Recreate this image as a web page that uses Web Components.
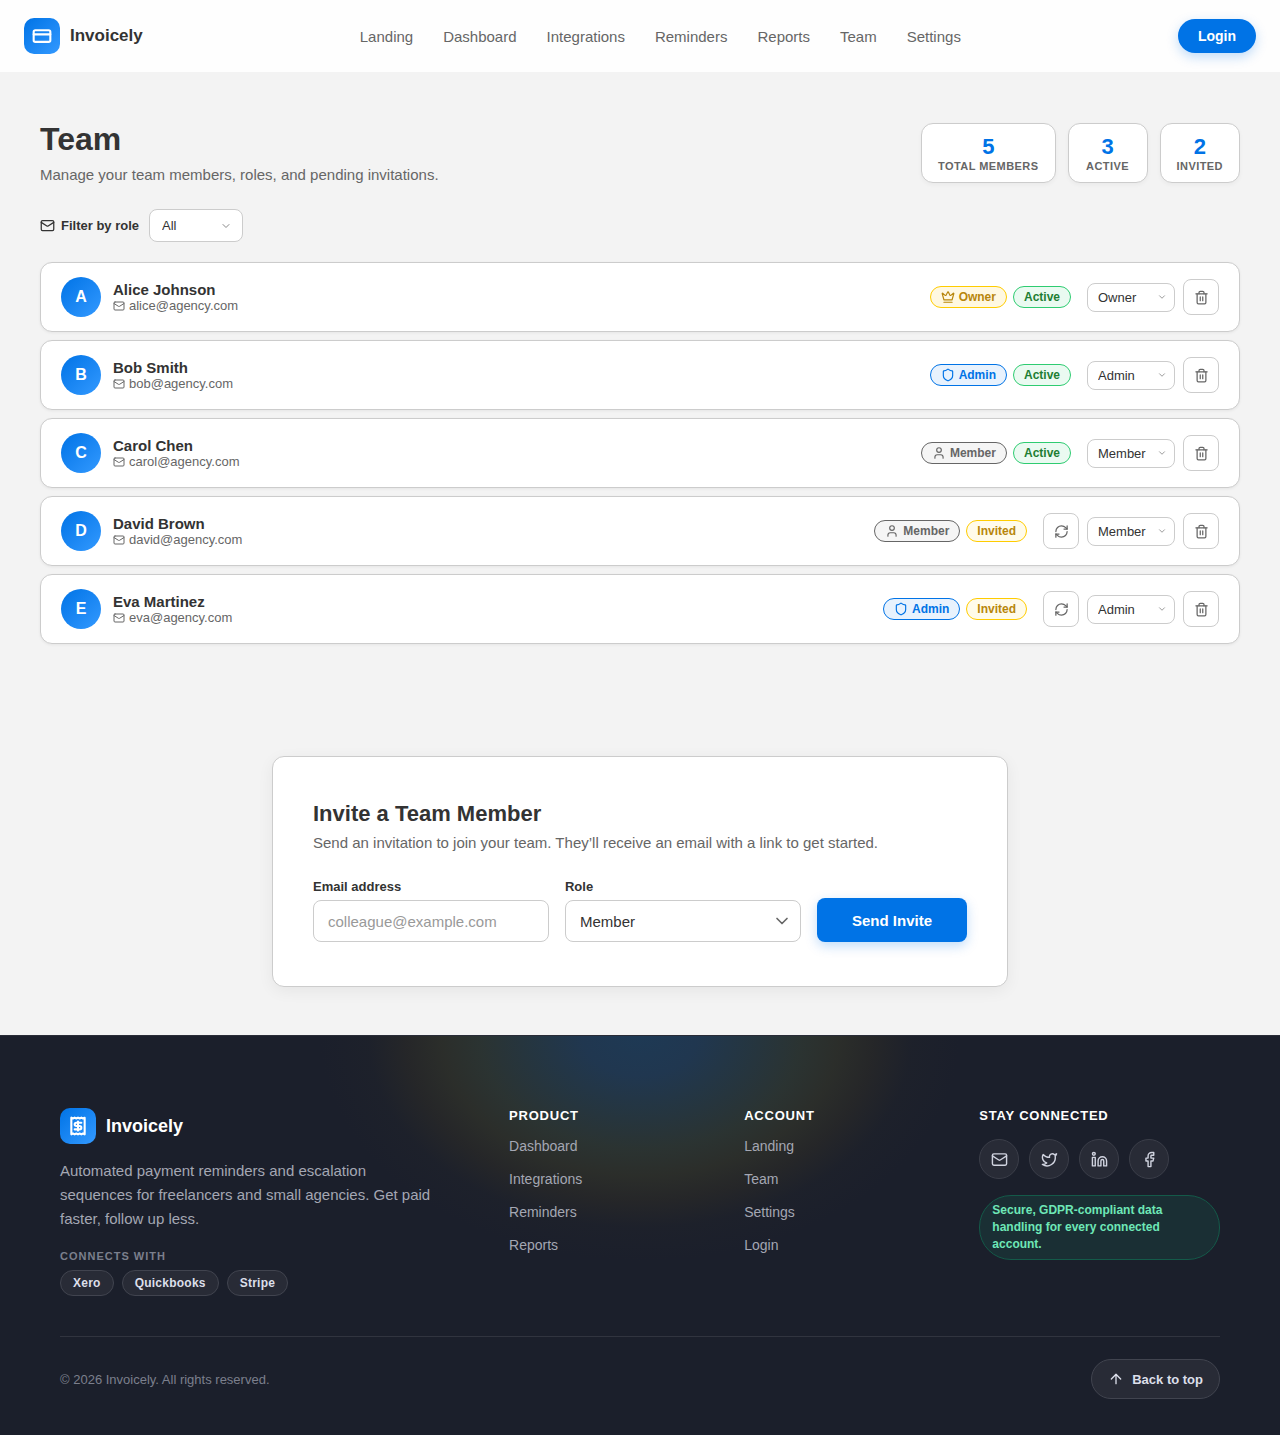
<!DOCTYPE html>
<html lang="en">
<head>
<meta charset="utf-8">
<meta name="viewport" content="width=device-width, initial-scale=1">
<title>Team - Invoicely</title>
<style>
    :root {
        --primary: #0073e6;
        --primary-light: #3399ff;
        --text: #333333;
        --muted: #666666;
        --border: #cccccc;
        --dark: #1b1f2b;
    }
    body {
        margin: 0;
        background: #f3f3f3;
        color: var(--text);
        font-family: "Liberation Sans", Arial, sans-serif;
        font-size: 15px;
    }
</style>
</head>
<body>
<site-header></site-header>
<team-page>
    <stat-card slot="stats" value="5">Total members</stat-card>
    <stat-card slot="stats" value="3">Active</stat-card>
    <stat-card slot="stats" value="2">Invited</stat-card>
    <member-row name="Alice Johnson" email="alice@agency.com" role-name="Owner" status="Active"></member-row>
    <member-row name="Bob Smith" email="bob@agency.com" role-name="Admin" status="Active"></member-row>
    <member-row name="Carol Chen" email="carol@agency.com" role-name="Member" status="Active"></member-row>
    <member-row name="David Brown" email="david@agency.com" role-name="Member" status="Invited"></member-row>
    <member-row name="Eva Martinez" email="eva@agency.com" role-name="Admin" status="Invited"></member-row>
</team-page>
<invite-form></invite-form>
<site-footer></site-footer>

<script>
const icons = {
    card: `<rect x="2" y="5" width="20" height="14" rx="2"/><path d="M2 10h20"/>`,
    mail: `<rect x="2" y="4" width="20" height="16" rx="2"/><path d="m22 7-8.97 5.7a1.94 1.94 0 0 1-2.06 0L2 7"/>`,
    chevron: `<path d="m6 9 6 6 6-6"/>`,
    crown: `<path d="M11.562 3.266a.5.5 0 0 1 .876 0L15.39 8.87a1 1 0 0 0 1.516.294L21.183 5.5a.5.5 0 0 1 .798.519l-2.834 10.246a1 1 0 0 1-.956.734H5.81a1 1 0 0 1-.957-.734L2.02 6.02a.5.5 0 0 1 .798-.519l4.276 3.664a1 1 0 0 0 1.516-.294z"/><path d="M5 21h14"/>`,
    shield: `<path d="M20 13c0 5-3.5 7.5-7.66 8.95a1 1 0 0 1-.67-.01C7.5 20.5 4 18 4 13V6a1 1 0 0 1 1-1c2 0 4.5-1.2 6.24-2.72a1.17 1.17 0 0 1 1.52 0C14.51 3.81 17 5 19 5a1 1 0 0 1 1 1z"/>`,
    user: `<path d="M19 21v-2a4 4 0 0 0-4-4H9a4 4 0 0 0-4 4v2"/><circle cx="12" cy="7" r="4"/>`,
    trash: `<path d="M3 6h18"/><path d="M19 6v14c0 1-1 2-2 2H7c-1 0-2-1-2-2V6"/><path d="M8 6V4c0-1 1-2 2-2h4c1 0 2 1 2 2v2"/><path d="M10 11v6M14 11v6"/>`,
    refresh: `<path d="M3 12a9 9 0 0 1 9-9 9.75 9.75 0 0 1 6.74 2.74L21 8"/><path d="M21 3v5h-5"/><path d="M21 12a9 9 0 0 1-9 9 9.75 9.75 0 0 1-6.74-2.74L3 16"/><path d="M8 16H3v5"/>`,
    receipt: `<path d="M4 2v20l2-1 2 1 2-1 2 1 2-1 2 1 2-1 2 1V2l-2 1-2-1-2 1-2-1-2 1-2-1-2 1Z"/><path d="M16 8h-6a2 2 0 1 0 0 4h4a2 2 0 1 1 0 4H8"/><path d="M12 17.5v-11"/>`,
    twitter: `<path d="M22 4s-.7 2.1-2 3.4c1.6 10-9.4 17.3-18 11.6 2.2.1 4.4-.6 6-2C3 15.5.5 9.6 3 5c2.2 2.6 5.6 4.1 9 4-.9-4.2 4-6.6 7-3.8 1.1 0 3-1.2 3-1.2z"/>`,
    linkedin: `<path d="M16 8a6 6 0 0 1 6 6v7h-4v-7a2 2 0 0 0-4 0v7h-4v-7a6 6 0 0 1 6-6z"/><rect x="2" y="9" width="4" height="12"/><circle cx="4" cy="4" r="2"/>`,
    facebook: `<path d="M18 2h-3a5 5 0 0 0-5 5v3H7v4h3v8h4v-8h3l1-4h-4V7a1 1 0 0 1 1-1h3z"/>`,
    arrow: `<path d="m5 12 7-7 7 7"/><path d="M12 19V5"/>`
};

// every component renders its template into an open shadow root
class BaseElement extends HTMLElement {
    constructor() {
        super();
        this.attachShadow({ mode: "open" });
    }
    connectedCallback() {
        const template = document.createElement("template");
        template.innerHTML = `
        <style>
            *, *::before { box-sizing: border-box; }
            h1, h2, h3, p, ul { margin: 0; padding: 0; }
            ul { list-style: none; }
            a { color: inherit; text-decoration: none; }
            button, select, input { font: inherit; color: inherit; margin: 0; }
            button { cursor: pointer; }
            ${this.getStyle()}
        </style>
        ${this.getTemplate()}`;
        this.shadowRoot.appendChild(template.content.cloneNode(true));
    }
}

class UiIcon extends BaseElement {
    getStyle() {
        return `
            :host { display: inline-flex; flex: none; }
            svg { display: block; }`;
    }
    getTemplate() {
        const size = this.getAttribute("size") || 16;
        return `
        <svg width="${size}" height="${size}" viewBox="0 0 24 24" fill="none" stroke="currentColor"
            stroke-width="${this.getAttribute("stroke") || 2}" stroke-linecap="round" stroke-linejoin="round" aria-hidden="true">
            ${icons[this.getAttribute("name")]}
        </svg>`;
    }
}

class BrandLogo extends BaseElement {
    getStyle() {
        return `
            :host { display: block; font-size: 17px; font-weight: 700; }
            a { display: flex; align-items: center; gap: 10px; }
            .mark {
                display: grid;
                place-items: center;
                width: 36px;
                height: 36px;
                border-radius: 10px;
                color: #fff;
                background: linear-gradient(135deg, var(--primary), var(--primary-light));
            }`;
    }
    getTemplate() {
        return `
        <a href="#">
            <span class="mark"><ui-icon name="${this.getAttribute("icon")}" size="20" stroke="2.5"></ui-icon></span>
            <span>Invoicely</span>
        </a>`;
    }
}

class SiteHeader extends BaseElement {
    getStyle() {
        return `
            :host { display: block; background: #fefefe; }
            header {
                display: flex;
                align-items: center;
                justify-content: space-between;
                min-height: 72px;
                padding: 0 24px;
            }
            ul { display: flex; gap: 30px; font-size: 15px; color: var(--muted); }
            button {
                border: 0;
                border-radius: 17px;
                height: 34px;
                padding: 0 20px;
                background: var(--primary);
                color: #fff;
                font-size: 14px;
                font-weight: 700;
                box-shadow: 0 4px 12px rgba(0, 115, 230, .25);
            }`;
    }
    getTemplate() {
        const links = ["Landing", "Dashboard", "Integrations", "Reminders", "Reports", "Team", "Settings"];
        return `
        <header>
            <brand-logo icon="card"></brand-logo>
            <nav><ul>${links.map(l => `<li><a href="#">${l}</a></li>`).join("")}</ul></nav>
            <button type="button">Login</button>
        </header>`;
    }
}

class StatCard extends BaseElement {
    getStyle() {
        return `
            :host {
                display: block;
                box-sizing: border-box;
                min-width: 80px;
                padding: 10px 16px 9px;
                text-align: center;
                background: #fff;
                border: 1px solid var(--border);
                border-radius: 12px;
                box-shadow: 0 2px 4px rgba(0, 0, 0, .04);
            }
            .value { font-size: 22px; line-height: 26px; font-weight: 700; color: var(--primary); }
            .label {
                font-size: 11px;
                line-height: 13px;
                font-weight: 700;
                letter-spacing: .04em;
                text-transform: uppercase;
                color: var(--muted);
            }`;
    }
    getTemplate() {
        return `
        <div class="value">${this.getAttribute("value")}</div>
        <div class="label"><slot></slot></div>`;
    }
}

class RoleSelect extends BaseElement {
    getStyle() {
        return `
            :host { display: block; font-size: 13px; --height: 29px; --pad: 10px; --arrow: 8px; --radius: 8px; }
            :host([kind="filter"]) { --height: 33px; --pad: 12px; --arrow: 11px; }
            :host([kind="field"]) { font-size: 15px; --height: 42px; --pad: 14px; --arrow: 9px; }
            .wrap { display: grid; align-items: center; }
            .wrap > * { grid-area: 1 / 1; }
            select {
                appearance: none;
                width: 100%;
                height: var(--height);
                padding: 0 var(--pad);
                background: #fff;
                border: 1px solid var(--border);
                border-radius: var(--radius);
            }
            ui-icon { justify-self: end; margin-right: var(--arrow); color: #888; pointer-events: none; }
            :host([kind="field"]) ui-icon { color: var(--muted); }
            .name { display: block; margin-bottom: 6px; font-size: 13px; line-height: 15px; font-weight: 700; }`;
    }
    getTemplate() {
        const kind = this.getAttribute("kind");
        const value = this.getAttribute("value");
        const label = this.getAttribute("label");
        const roles = ["Owner", "Admin", "Member"];
        const options = kind === "filter" ? ["All", ...roles] : roles;
        const size = kind === "field" ? 20 : kind === "filter" ? 12 : 10;
        return `
        ${kind === "field" ? `<label class="name" for="role">${label}</label>` : ""}
        <div class="wrap">
            <select id="role" aria-label="${label}">
                ${options.map(o => `<option${o === value ? " selected" : ""}>${o}</option>`).join("")}
            </select>
            <ui-icon name="chevron" size="${size}"></ui-icon>
        </div>`;
    }
}

class MemberRow extends BaseElement {
    getStyle() {
        return `
            :host {
                display: flex;
                align-items: center;
                gap: 16px;
                padding: 14px 20px;
                background: #fff;
                border: 1px solid var(--border);
                border-radius: 12px;
                box-shadow: 0 1px 3px rgba(0, 0, 0, .06);
            }
            .person { display: flex; align-items: center; gap: 12px; flex: 1; min-width: 0; }
            .avatar {
                display: grid;
                place-items: center;
                flex: none;
                width: 40px;
                height: 40px;
                border-radius: 50%;
                color: #fff;
                font-size: 16px;
                font-weight: 700;
                background: linear-gradient(135deg, var(--primary), var(--primary-light));
            }
            .name { font-size: 15px; line-height: 17px; font-weight: 700; }
            .email { display: flex; align-items: center; gap: 4px; font-size: 13px; line-height: 15px; color: var(--muted); }
            .badges { display: flex; gap: 6px; }
            .badge {
                display: inline-flex;
                align-items: center;
                gap: 4px;
                height: 22px;
                padding: 0 10px;
                border: 1px solid currentColor;
                border-radius: 11px;
                font-size: 12px;
                font-weight: 700;
            }
            .owner { color: #b8860b; background: #fff8e1; border-color: #ffcc00; }
            .admin { color: var(--primary); background: #e8f2fd; }
            .member { color: var(--muted); background: #f5f5f5; }
            .active { color: #1e7e34; background: #eafaf1; border-color: #2ecc71; }
            .invited { color: #b8860b; background: #fffbea; border-color: #ffcc00; }
            .actions { display: flex; align-items: center; gap: 8px; margin-block: -2px; }
            role-select { width: 88px; }
            button {
                display: grid;
                place-items: center;
                width: 36px;
                height: 36px;
                padding: 0;
                color: var(--muted);
                background: #fff;
                border: 1px solid var(--border);
                border-radius: 8px;
            }`;
    }
    getTemplate() {
        const name = this.getAttribute("name");
        const role = this.getAttribute("role-name");
        const status = this.getAttribute("status");
        const icon = { Owner: "crown", Admin: "shield", Member: "user" }[role];
        return `
        <div class="person">
            <div class="avatar">${name[0]}</div>
            <div>
                <div class="name">${name}</div>
                <div class="email"><ui-icon name="mail" size="12"></ui-icon>${this.getAttribute("email")}</div>
            </div>
        </div>
        <div class="badges">
            <span class="badge ${role.toLowerCase()}"><ui-icon name="${icon}" size="14"></ui-icon>${role}</span>
            <span class="badge ${status.toLowerCase()}">${status}</span>
        </div>
        <div class="actions">
            ${status === "Invited" ? `<button type="button" aria-label="Resend invite to ${name}"><ui-icon name="refresh" size="15"></ui-icon></button>` : ""}
            <role-select value="${role}" label="Role of ${name}"></role-select>
            <button type="button" aria-label="Remove ${name}"><ui-icon name="trash" size="15"></ui-icon></button>
        </div>`;
    }
}

class TeamPage extends BaseElement {
    getStyle() {
        return `
            :host { display: block; }
            main { max-width: 1280px; margin: 0 auto; padding: 48px 40px 64px; }
            .top { display: flex; align-items: flex-end; justify-content: space-between; gap: 24px; margin-bottom: 26px; }
            h1 { font-size: 32px; line-height: 38px; }
            .top p { margin-top: 8px; font-size: 15px; line-height: 17px; color: var(--muted); }
            .stats { display: flex; gap: 12px; }
            .filter { display: flex; align-items: center; gap: 10px; margin-bottom: 20px; }
            .filter span { display: flex; align-items: center; gap: 6px; font-size: 13px; font-weight: 700; }
            .filter role-select { width: 94px; }
            .list { display: flex; flex-direction: column; gap: 8px; }`;
    }
    getTemplate() {
        return `
        <main>
            <div class="top">
                <div>
                    <h1>Team</h1>
                    <p>Manage your team members, roles, and pending invitations.</p>
                </div>
                <div class="stats"><slot name="stats"></slot></div>
            </div>
            <div class="filter">
                <span><ui-icon name="mail" size="15"></ui-icon>Filter by role</span>
                <role-select kind="filter" value="All" label="Filter by role"></role-select>
            </div>
            <div class="list"><slot></slot></div>
        </main>`;
    }
}

class InviteForm extends BaseElement {
    getStyle() {
        return `
            :host { display: block; max-width: 736px; margin: 0 auto; padding: 48px 32px; }
            section {
                padding: 40px 40px 44px;
                background: #fff;
                border: 1px solid var(--border);
                border-radius: 12px;
                box-shadow: 0 4px 16px rgba(0, 0, 0, .06);
            }
            h2 { font-size: 22px; line-height: 33px; }
            p { margin: 1px 0 24px; font-size: 15px; line-height: 24px; color: var(--muted); }
            form { display: grid; grid-template-columns: 1fr 1fr auto; align-items: end; gap: 16px; }
            label { display: block; margin-bottom: 6px; font-size: 13px; line-height: 15px; font-weight: 700; }
            input {
                display: block;
                width: 100%;
                height: 42px;
                padding: 0 14px;
                font-size: 15px;
                background: #fff;
                border: 1px solid var(--border);
                border-radius: 8px;
            }
            input::placeholder { color: #999; }
            button {
                height: 44px;
                padding: 0 35px;
                border: 0;
                border-radius: 8px;
                background: var(--primary);
                color: #fff;
                font-size: 15px;
                font-weight: 700;
                box-shadow: 0 4px 12px rgba(0, 115, 230, .25);
            }`;
    }
    getTemplate() {
        return `
        <section>
            <h2>Invite a Team Member</h2>
            <p>Send an invitation to join your team. They’ll receive an email with a link to get started.</p>
            <form>
                <div>
                    <label for="email">Email address</label>
                    <input id="email" type="email" placeholder="colleague@example.com">
                </div>
                <role-select kind="field" value="Member" label="Role"></role-select>
                <button type="button">Send Invite</button>
            </form>
        </section>`;
    }
}

class FooterLinks extends BaseElement {
    getStyle() {
        return `
            :host { display: block; }
            h3 {
                margin-bottom: 15px;
                font-size: 13px;
                line-height: 15px;
                letter-spacing: .06em;
                text-transform: uppercase;
                color: #fff;
            }
            ul { display: flex; flex-direction: column; gap: 17px; font-size: 14px; line-height: 16px; }`;
    }
    getTemplate() {
        const links = (this.getAttribute("links") || "").split(",").filter(Boolean);
        return `
        <h3>${this.getAttribute("heading")}</h3>
        ${links.length ? `<ul>${links.map(l => `<li><a href="#">${l}</a></li>`).join("")}</ul>` : ""}
        <slot></slot>`;
    }
}

class SiteFooter extends BaseElement {
    getStyle() {
        return `
            :host {
                display: block;
                border-top: 1px solid #292c37;
                color: #a4a7b3;
                background:
                    radial-gradient(320px 225px at 50% 0,
                        rgba(31, 66, 98, .75) 0%,
                        rgba(34, 63, 92, .75) 18%,
                        rgba(40, 61, 72, .75) 34%,
                        rgba(48, 58, 52, .75) 50%,
                        rgba(50, 52, 42, .7) 62%,
                        rgba(48, 46, 38, .5) 73%,
                        rgba(38, 40, 42, .2) 85%,
                        rgba(27, 31, 43, 0) 100%),
                    var(--dark);
            }
            footer { max-width: 1280px; margin: 0 auto; padding: 72px 60px 36px; }
            .columns { display: grid; grid-template-columns: 15fr 7fr 7fr 9fr; gap: 48px; padding-bottom: 40px; }
            brand-logo { color: #fff; font-size: 18px; }
            .about { max-width: 376px; margin: 15px 0 19px; font-size: 15px; line-height: 24px; }
            .caption {
                margin-bottom: 7px;
                font-size: 11px;
                line-height: 13px;
                font-weight: 700;
                letter-spacing: 1px;
                text-transform: uppercase;
                color: #7b7f8d;
            }
            .pills { display: flex; flex-wrap: wrap; gap: 8px; }
            .pills li {
                padding: 5px 12px;
                border: 1px solid #41444f;
                border-radius: 13px;
                background: #282b36;
                color: #dcdfea;
                font-size: 12px;
                line-height: 14px;
                font-weight: 700;
                letter-spacing: .02em;
            }
            .social { display: flex; gap: 10px; margin: 16px 0; }
            .social a {
                display: grid;
                place-items: center;
                width: 40px;
                height: 40px;
                border: 1px solid #3b3e49;
                border-radius: 50%;
                background: #282b36;
                color: #d0d3df;
            }
            .secure {
                padding: 6px 12px;
                border: 1px solid #145a49;
                border-radius: 32px;
                background: #1a2f34;
                color: #6ee7b7;
                font-size: 12px;
                line-height: 17px;
                font-weight: 700;
            }
            .bottom {
                display: flex;
                align-items: center;
                justify-content: space-between;
                padding-top: 22px;
                border-top: 1px solid #31343f;
                color: #7b7f8d;
                font-size: 13px;
            }
            .bottom a {
                display: flex;
                align-items: center;
                gap: 8px;
                height: 40px;
                padding: 0 16px;
                border: 1px solid #41444f;
                border-radius: 20px;
                background: #282b36;
                color: #dcdfea;
                font-weight: 700;
            }`;
    }
    getTemplate() {
        const social = { mail: "Email", twitter: "Twitter", linkedin: "LinkedIn", facebook: "Facebook" };
        return `
        <footer>
            <div class="columns">
                <div>
                    <brand-logo icon="receipt"></brand-logo>
                    <p class="about">Automated payment reminders and escalation sequences for freelancers and small agencies. Get paid faster, follow up less.</p>
                    <p class="caption">Connects with</p>
                    <ul class="pills"><li>Xero</li><li>Quickbooks</li><li>Stripe</li></ul>
                </div>
                <footer-links heading="Product" links="Dashboard,Integrations,Reminders,Reports"></footer-links>
                <footer-links heading="Account" links="Landing,Team,Settings,Login"></footer-links>
                <footer-links heading="Stay connected">
                    <div class="social">
                        ${Object.keys(social).map(s => `<a href="#" aria-label="${social[s]}"><ui-icon name="${s}" size="17"></ui-icon></a>`).join("")}
                    </div>
                    <p class="secure">Secure, GDPR-compliant data handling for every connected account.</p>
                </footer-links>
            </div>
            <div class="bottom">
                <span>© 2026 Invoicely. All rights reserved.</span>
                <a href="#"><ui-icon name="arrow" size="16"></ui-icon>Back to top</a>
            </div>
        </footer>`;
    }
}

customElements.define("ui-icon", UiIcon);
customElements.define("brand-logo", BrandLogo);
customElements.define("site-header", SiteHeader);
customElements.define("stat-card", StatCard);
customElements.define("role-select", RoleSelect);
customElements.define("member-row", MemberRow);
customElements.define("team-page", TeamPage);
customElements.define("invite-form", InviteForm);
customElements.define("footer-links", FooterLinks);
customElements.define("site-footer", SiteFooter);
</script>
</body>
</html>
